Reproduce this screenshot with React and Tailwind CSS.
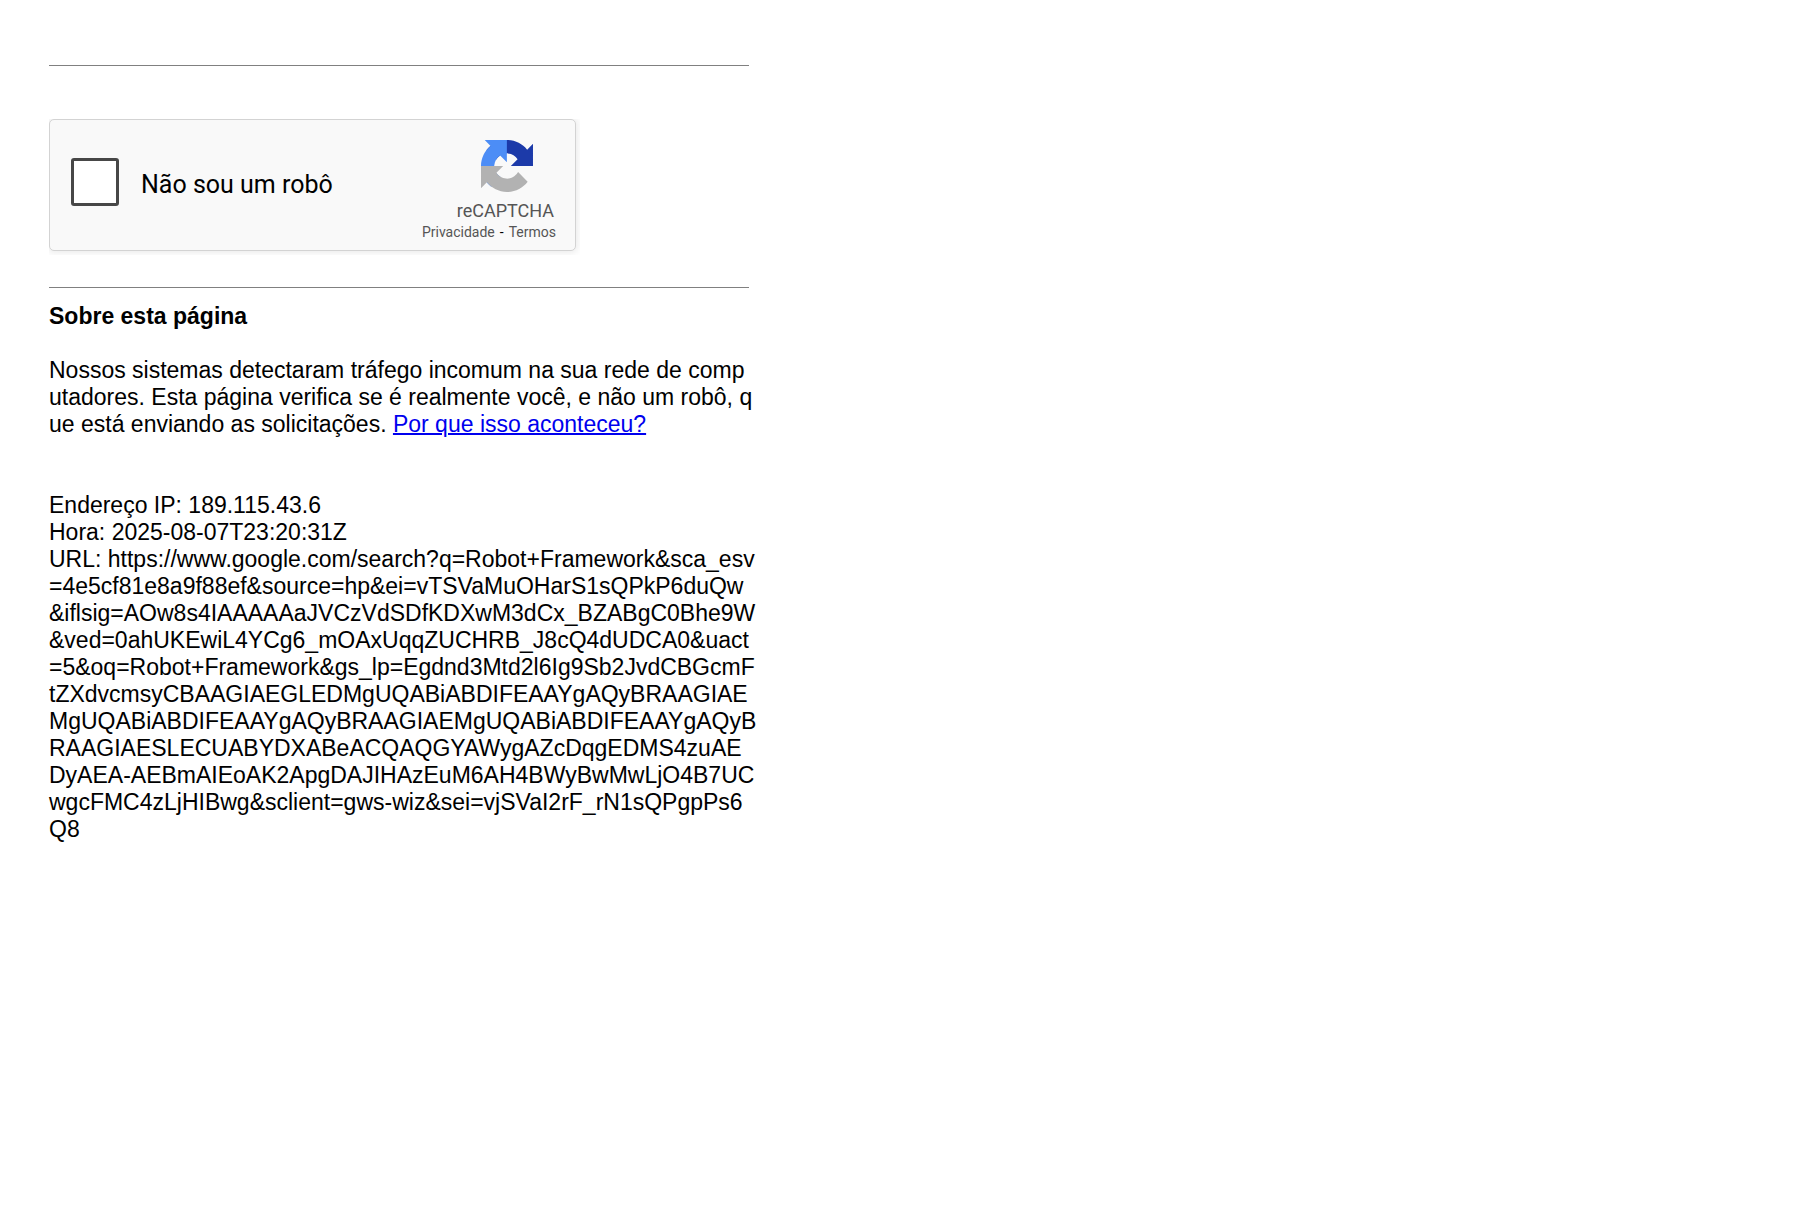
const urlLines = [
  "URL: https://www.google.com/search?q=Robot+Framework&sca_esv",
  "=4e5cf81e8a9f88ef&source=hp&ei=vTSVaMuOHarS1sQPkP6duQw",
  "&iflsig=AOw8s4IAAAAAaJVCzVdSDfKDXwM3dCx_BZABgC0Bhe9W",
  "&ved=0ahUKEwiL4YCg6_mOAxUqqZUCHRB_J8cQ4dUDCA0&uact",
  "=5&oq=Robot+Framework&gs_lp=Egdnd3Mtd2l6Ig9Sb2JvdCBGcmF",
  "tZXdvcmsyCBAAGIAEGLEDMgUQABiABDIFEAAYgAQyBRAAGIAE",
  "MgUQABiABDIFEAAYgAQyBRAAGIAEMgUQABiABDIFEAAYgAQyB",
  "RAAGIAESLECUABYDXABeACQAQGYAWygAZcDqgEDMS4zuAE",
  "DyAEA-AEBmAIEoAK2ApgDAJIHAzEuM6AH4BWyBwMwLjO4B7UC",
  "wgcFMC4zLjHIBwg&sclient=gws-wiz&sei=vjSVaI2rF_rN1sQPgpPs6",
  "Q8",
];

function RecaptchaLogo() {
  return (
    <svg viewBox="0 0 64 64" className="mr-[23px] size-[52px]" aria-hidden="true">
      <path
        fill="#1c3aa9"
        d="M64 31.955l-.033-1.37V4.687l-7.16 7.16C50.948 4.674 42.033.093 32.05.093c-10.4 0-19.622 4.96-25.458 12.64l11.736 11.86a15.55 15.55 0 0 1 4.754-5.334c2.05-1.6 4.952-2.906 8.968-2.906.485 0 .86.057 1.135.163 4.976.393 9.288 3.14 11.828 7.124l-8.307 8.307L64 31.953"
      />
      <path
        fill="#4c8df6"
        d="M31.862.094l-1.37.033H4.594l7.16 7.16C4.58 13.147 0 22.06 0 32.046c0 10.4 4.96 19.622 12.64 25.458L24.5 45.768a15.55 15.55 0 0 1-5.334-4.754c-1.6-2.05-2.906-4.952-2.906-8.968 0-.485.057-.86.163-1.135.393-4.976 3.14-9.288 7.124-11.828l8.307 8.307L31.86.095"
      />
      <path
        fill="#b2b2b2"
        d="M.001 32.045l.033 1.37v25.898l7.16-7.16c5.86 7.173 14.774 11.754 24.76 11.754 10.4 0 19.622-4.96 25.458-12.64l-11.736-11.86a15.55 15.55 0 0 1-4.754 5.334c-2.05 1.6-4.952 2.906-8.968 2.906-.485 0-.86-.057-1.135-.163-4.976-.393-9.288-3.14-11.828-7.124l8.307-8.307c-10.522.04-22.4.066-27.295-.005"
      />
    </svg>
  );
}

function RecaptchaBox() {
  return (
    <div className="w-fit overflow-hidden pr-1 pb-1 font-[Roboto,sans-serif]">
      <div className="flex w-[527px] max-w-full justify-between rounded-[5px] border border-[#d3d3d3] bg-[#f9f9f9] pt-5 pr-[19px] pb-2 pl-[21px] shadow-[0_0_7px_2px_rgba(0,0,0,0.08)]">
        <div className="flex items-center pb-[18px]">
          <input
            id="robot-check"
            type="checkbox"
            className="size-12 appearance-none rounded-[3px] border-3 border-[#474747] bg-white"
          />
          <label htmlFor="robot-check" className="pt-1.5 pl-[22px] text-[25px] leading-[30px] text-black">
            Não sou um robô
          </label>
        </div>
        <div className="flex flex-col items-end text-[#555555]">
          <RecaptchaLogo />
          <div className="mt-2 mr-0.5 text-[18px] leading-[22px]">reCAPTCHA</div>
          <div className="flex gap-[5px] text-[14px] leading-5">
            <a href="#privacidade">Privacidade</a>
            <span className="text-black">-</span>
            <a href="#termos">Termos</a>
          </div>
        </div>
      </div>
    </div>
  );
}

export default function App() {
  return (
    <main className="min-h-screen bg-white px-[49px] pt-[65px] pb-12 font-['Liberation_Sans',Arial,sans-serif] text-[23px] leading-[27px] text-black">
      <div className="max-w-[700px]">
        <hr className="mb-[53px] border-[#808080]" />
        <RecaptchaBox />
        <hr className="mt-8 mb-[15px] border-[#808080]" />
        <h1 className="font-bold">Sobre esta página</h1>
        <p className="mt-[27px] whitespace-nowrap">
          Nossos sistemas detectaram tráfego incomum na sua rede de comp
          <br />
          utadores. Esta página verifica se é realmente você, e não um robô, q
          <br />
          ue está enviando as solicitações.{" "}
          <a href="#por-que" className="text-[#0000ee] underline decoration-2">
            Por que isso aconteceu?
          </a>
        </p>
        <p className="mt-[54px] whitespace-nowrap">
          Endereço IP: 189.115.43.6
          <br />
          Hora: 2025-08-07T23:20:31Z
          {urlLines.map((line) => (
            <span key={line} className="block">
              {line}
            </span>
          ))}
        </p>
      </div>
    </main>
  );
}
